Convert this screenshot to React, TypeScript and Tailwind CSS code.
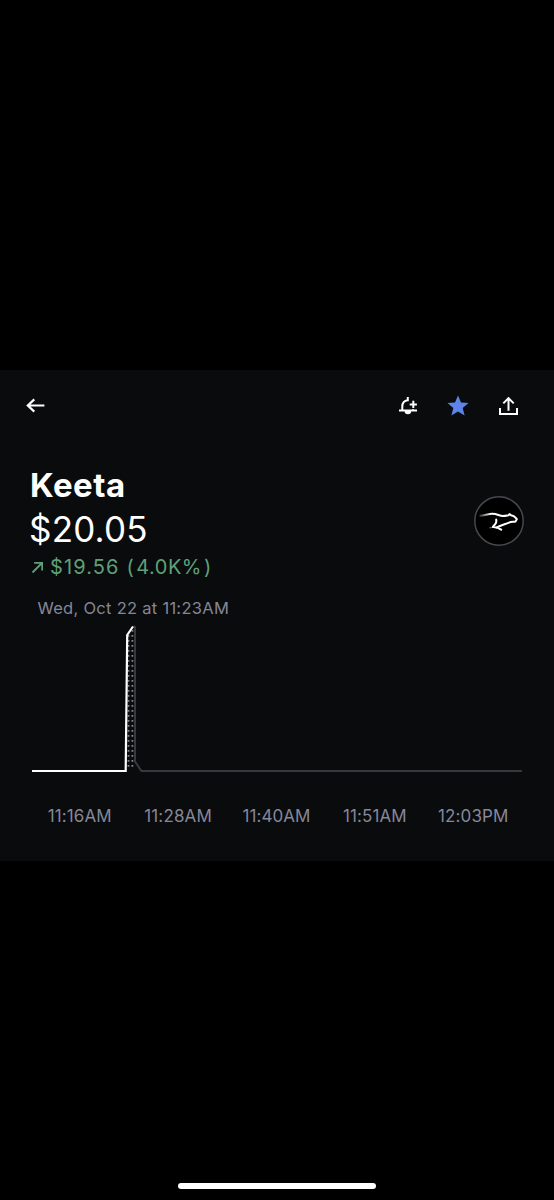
interface TimeLabel {
  text: string;
  className: string;
}

const TIME_LABELS: TimeLabel[] = [
  { text: '11:16AM', className: 'tracking-[0.1px]' },
  { text: '11:28AM', className: 'tracking-[0.15px]' },
  { text: '11:40AM', className: 'tracking-[0.05px]' },
  { text: '11:51AM', className: 'tracking-[0.1px]' },
  { text: '12:03PM', className: 'tracking-[0.15px]' },
];

function BackIcon() {
  return (
    <svg width="20" height="16" viewBox="0 0 20 16" fill="none" stroke="#fff" strokeWidth="2.2">
      <path d="M19.4 7.5H3M9.3 1.4L2.8 7.5l6.5 6.1" />
    </svg>
  );
}

function AlertIcon() {
  return (
    <svg width="20" height="20" viewBox="0 0 20 20" fill="none" stroke="#fff" strokeWidth="2">
      <path d="M1 14.5h18" />
      <path d="M4.3 14.5v-4c0-3.600 2-5.800 5.500-6.200V1" />
      <path d="M15.3 4.800v7.200M11.7 8.400h7.200" />
      <path d="M15 13.2v1" />
      <path d="M6.600 15h6.600a3.300 3.300 0 0 1-6.600 0z" fill="#fff" stroke="none" />
    </svg>
  );
}

function StarIcon() {
  return (
    <svg width="22" height="22" viewBox="0 0 22 22" fill="#5c84ea">
      <path d="M11 .4l3 7 7.5.6-5.8 4.9 1.900 7.700L11 16.5l-6.600 4.100 1.900-7.700L.5 8l7.5-.6z" />
    </svg>
  );
}

function ShareIcon() {
  return (
    <svg width="20" height="20" viewBox="0 0 20 20" fill="none" stroke="#fff" strokeWidth="2">
      <path d="M2 12v6h17V12M10.5 14.800V2.400M5.300 7.400L10.5 2.100l5.200 5.300" />
    </svg>
  );
}

function TrendIcon() {
  return (
    <svg width="13" height="13" viewBox="0 0 13 13" fill="none" stroke="#5da179" strokeWidth="1.8">
      <path d="M2.5 11.500L12 2M4.200 1.900h8v7.700" />
    </svg>
  );
}

function KeetaLogo() {
  return (
    <svg width="52" height="52" viewBox="0 0 52 52" fill="none">
      <defs>
        <linearGradient id="tail" x1="6" y1="0" x2="18" y2="0" gradientUnits="userSpaceOnUse">
          <stop offset="0" stopColor="#fff" stopOpacity="0.15" />
          <stop offset="1" stopColor="#fff" />
        </linearGradient>
      </defs>
      <circle cx="26" cy="26" r="24.2" fill="#000" stroke="#47484e" strokeWidth="1.5" />
      <g strokeWidth="2" strokeLinejoin="round">
        <path d="M6.500 20.800c5 0 8-2.100 13-2.100 4.500 0 7 2.300 10.500 2.300" stroke="url(#tail)" />
        <path
          d="M29.500 21c2.300.1 4.200-.4 6-.7l1-1.300 1.500 1.200c2 .3 3.600 1 4.300 2.200l1.500 1.800-1.300 2.200c-2.200.5-4.300.3-6.500 1.200-4.500 1.800-9 2.800-13.500 5.400"
          stroke="#fff"
        />
        <path
          d="M23.200 24.500c.5 2.500 0 3.800-1.300 5-1 1-1.600 1.600-2 2.500 3-.1 5.600.9 8.300 2.600"
          stroke="#fff"
          strokeLinecap="round"
        />
        <path d="M16.500 32.800l4-.8" stroke="#fff" strokeOpacity="0.4" strokeWidth="1.2" />
      </g>
    </svg>
  );
}

function PriceChart() {
  return (
    <svg width="492" height="150" viewBox="0 0 492 150" fill="none" className="block">
      <path d="M103.5 1L105 2v134.500l6.500 9.500H492" stroke="#38393c" strokeWidth="2" />
      <path d="M98.500 10V145M102.400 5V145" stroke="#85868a" strokeWidth="1.8" strokeDasharray="1.8 3.2" />
      <path d="M2 146H95.700L97.200 10L103 1.500" stroke="#fff" strokeWidth="2.2" />
    </svg>
  );
}

export default function App() {
  return (
    <div className="flex h-[1200px] w-[554px] flex-col bg-black pt-[370px] font-['Inter',sans-serif] text-white">
      <main className="h-[491px] bg-[#0a0b0d] px-[30px]">
        <header className="flex items-center justify-between pt-[25px]">
          <button aria-label="Back" className="-ml-[5px]">
            <BackIcon />
          </button>
          <div className="flex items-center gap-[29px] pr-[6px]">
            <button aria-label="Add alert">
              <AlertIcon />
            </button>
            <button aria-label="Favorite">
              <StarIcon />
            </button>
            <button aria-label="Share">
              <ShareIcon />
            </button>
          </div>
        </header>

        <section className="mt-[46px] flex items-start justify-between">
          <div className="whitespace-nowrap">
            <h1 className="text-[33px] leading-[44px] font-bold tracking-[0.5px]">Keeta</h1>
            <p className="-ml-px text-[35px] leading-[44px] tracking-[0.2px]">$20.05</p>
            <p className="mt-[2px] flex h-[28px] items-center text-[20px] text-[#5da179]">
              <TrendIcon />
              <span className="ml-[7px] tracking-[1.1px]">$19.56</span>
              <span className="ml-[7px] tracking-[0.5px]">
                (<span className="ml-[2px]">4.0K%</span>
                <span className="ml-[2px]">)</span>
              </span>
            </p>
          </div>
          <div className="-mr-px mt-[32px]">
            <KeetaLogo />
          </div>
        </section>

        <p className="mt-[15px] ml-[7.5px] h-[24px] text-[16.5px] leading-[24px] tracking-[0.28px] text-[#858796]">
          Wed, Oct 22 at 11:23AM
        </p>

        <div className="mt-[5px]">
          <PriceChart />
        </div>

        <div className="mt-[29px] ml-[0.5px] grid w-[492px] grid-cols-5 text-center text-[17px] leading-[24px] text-[#85879a]">
          {TIME_LABELS.map((label) => (
            <span key={label.text} className={label.className}>
              {label.text}
            </span>
          ))}
        </div>
      </main>
      <div className="mx-auto mt-auto mb-[11px] h-[6px] w-[198px] rounded-full bg-white" />
    </div>
  );
}
